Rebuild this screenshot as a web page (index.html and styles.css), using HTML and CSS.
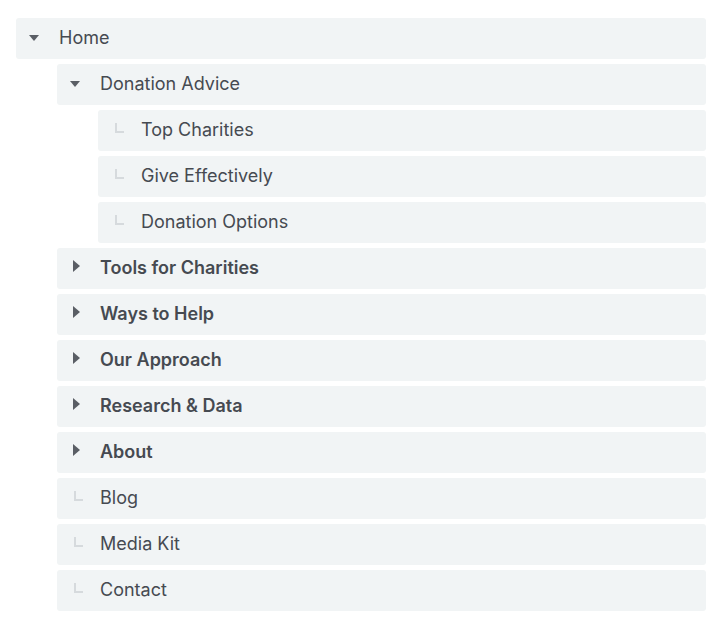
FILE: index.html
```html
<!DOCTYPE html>
<html>
<head>
<meta charset="utf-8">
<link rel="stylesheet" href="styles.css">
</head>
<body>
<ul class="tree">
  <li>
    <div class="row"><span class="icon down"></span><span class="label">Home</span></div>
    <ul class="tree sub">
      <li>
        <div class="row"><span class="icon down"></span><span class="label">Donation Advice</span></div>
        <ul class="tree sub">
          <li><div class="row"><span class="icon leaf"></span><span class="label">Top Charities</span></div></li>
          <li><div class="row"><span class="icon leaf"></span><span class="label">Give Effectively</span></div></li>
          <li><div class="row"><span class="icon leaf"></span><span class="label">Donation Options</span></div></li>
        </ul>
      </li>
      <li><div class="row"><span class="icon right"></span><span class="label bold">Tools for Charities</span></div></li>
      <li><div class="row"><span class="icon right"></span><span class="label bold">Ways to Help</span></div></li>
      <li><div class="row"><span class="icon right"></span><span class="label bold">Our Approach</span></div></li>
      <li><div class="row"><span class="icon right"></span><span class="label bold">Research &amp; Data</span></div></li>
      <li><div class="row"><span class="icon right"></span><span class="label bold">About</span></div></li>
      <li><div class="row"><span class="icon leaf"></span><span class="label">Blog</span></div></li>
      <li><div class="row"><span class="icon leaf"></span><span class="label">Media Kit</span></div></li>
      <li><div class="row"><span class="icon leaf"></span><span class="label">Contact</span></div></li>
    </ul>
  </li>
</ul>
</body>
</html>
```
FILE: styles.css
```css
html, body {
  margin: 0;
  padding: 0;
  background: #ffffff;
}
body {
  padding: 18px 14px 0 16px;
  font-family: Inter, Lato, "Liberation Sans", sans-serif;
  color: #464a51;
}
.tree {
  list-style: none;
  margin: 0;
  padding: 0;
  display: flex;
  flex-direction: column;
  gap: 5px;
}
.tree li {
  display: flex;
  flex-direction: column;
  gap: 5px;
}
.tree.sub {
  padding-left: 41px;
}
.row {
  height: 41px;
  box-sizing: border-box;
  padding-bottom: 1px;
  background: #f1f4f5;
  border-radius: 3px;
  display: flex;
  align-items: center;
}
.icon {
  align-self: stretch;
  width: 43px;
  position: relative;
  flex: none;
}
.icon.down::before {
  content: "";
  position: absolute;
  left: 13px;
  top: 17px;
  border-left: 5.5px solid transparent;
  border-right: 5.5px solid transparent;
  border-top: 6px solid #5a5e65;
}
.icon.right::before {
  content: "";
  position: absolute;
  left: 16px;
  top: 12px;
  border-top: 6px solid transparent;
  border-bottom: 6px solid transparent;
  border-left: 7px solid #5a5e65;
}
.icon.leaf::before {
  content: "";
  position: absolute;
  left: 17px;
  top: 13px;
  width: 7px;
  height: 8px;
  border-left: 2px solid #d6dadd;
  border-bottom: 2px solid #d6dadd;
}
.label {
  font-size: 18px;
  line-height: 1;
  font-weight: 400;
}
.label.bold {
  font-weight: 600;
}
```
